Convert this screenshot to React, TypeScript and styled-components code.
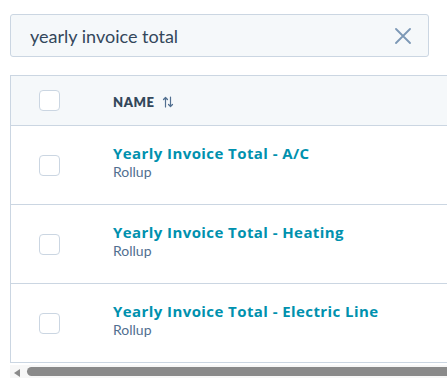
import React from "react";
import styled, { createGlobalStyle } from "styled-components";

const Global = createGlobalStyle`
  html, body { margin: 0; padding: 0; background: #ffffff; overflow: hidden; }
  body { font-family: Lato, "Noto Sans", sans-serif; color: #33475b; }
`;

const Page = styled.div`
  width: 447px;
  height: 386px;
  overflow: hidden;
  padding: 14px 0 0 10px;
  box-sizing: border-box;
  display: flex;
  flex-direction: column;
`;

const SearchBox = styled.div`
  width: 419px;
  height: 43px;
  box-sizing: border-box;
  border: 1px solid #cbd6e2;
  border-radius: 3px;
  background: #f5f8fa;
  display: flex;
  align-items: center;
  padding: 0 17px 0 19px;
`;

const SearchText = styled.span`
  flex: 1;
  font-size: 18px;
  color: #33475b;
`;

const ClearButton = styled.span`
  display: flex;
  width: 16px;
  height: 16px;
`;

const Table = styled.div`
  margin-top: 18px;
  width: 600px;
  border: 1px solid #cbd6e2;
  border-right: none;
  box-sizing: border-box;
`;

const HeaderRow = styled.div`
  height: 49px;
  background: #f5f8fa;
  border-bottom: 1px solid #cbd6e2;
  display: flex;
  align-items: center;
`;

const Row = styled.div<{ $last?: boolean }>`
  height: 78px;
  display: flex;
  align-items: center;
  border-bottom: ${(p) => (p.$last ? "none" : "1px solid #cbd6e2")};
  background: #ffffff;
`;

const CheckCell = styled.div`
  width: 102px;
  padding-left: 28px;
  box-sizing: border-box;
  display: flex;
  align-items: center;
`;

const Checkbox = styled.span`
  width: 21px;
  height: 21px;
  box-sizing: border-box;
  border: 1px solid #cbd6e2;
  border-radius: 4px;
  background: #ffffff;
`;

const HeaderLabel = styled.div`
  display: flex;
  align-items: center;
  gap: 7px;
  padding-top: 2px;
  font-size: 13px;
  font-weight: 800;
  letter-spacing: 0.6px;
  color: #33475b;
`;

const NameCell = styled.div`
  display: flex;
  flex-direction: column;
  margin-top: -6px;
`;

const Title = styled.a`
  font-family: "Open Sans", Lato, sans-serif;
  font-size: 15px;
  font-weight: 700;
  color: #0091ae;
  text-decoration: none;
  line-height: 20px;
  letter-spacing: 0.42px;
`;

const Sub = styled.span`
  font-size: 14px;
  color: #516f90;
  line-height: 18px;
`;

const ScrollBar = styled.div`
  height: 13px;
  margin-top: 2px;
  display: flex;
  align-items: center;
  gap: 7px;
  padding-left: 4px;
  background: #f7f7f7;
`;

const ArrowLeft = styled.span`
  width: 0;
  height: 0;
  margin-top: 2px;
  border-top: 4px solid transparent;
  border-bottom: 4px solid transparent;
  border-right: 6px solid #8a8a8a;
`;

const Thumb = styled.span`
  flex: 1;
  height: 9px;
  border-radius: 5px 0 0 5px;
  background: #8a8a8a;
`;

const rows = [
  "Yearly Invoice Total - A/C",
  "Yearly Invoice Total - Heating",
  "Yearly Invoice Total - Electric Line",
];

export default function App() {
  return (
    <>
      <Global />
      <Page>
        <SearchBox>
          <SearchText>yearly invoice total</SearchText>
          <ClearButton>
            <svg width="16" height="16" viewBox="0 0 16 16">
              <path d="M1 1 L15 15 M15 1 L1 15" stroke="#7c98b6" strokeWidth="1.8" strokeLinecap="round" />
            </svg>
          </ClearButton>
        </SearchBox>
        <Table>
          <HeaderRow>
            <CheckCell>
              <Checkbox />
            </CheckCell>
            <HeaderLabel>
              NAME
              <svg width="12" height="12" viewBox="0 0 12 12">
                <path d="M3.5 11 V1.5 M1.5 3.5 L3.5 1.5 L5.5 3.5 M8.5 1 V10.5 M6.5 8.5 L8.5 10.5 L10.5 8.5" stroke="#516f90" strokeWidth="1.2" fill="none" strokeLinecap="round" strokeLinejoin="round" />
              </svg>
            </HeaderLabel>
          </HeaderRow>
          {rows.map((r, i) => (
            <Row key={r} $last={i === rows.length - 1}>
              <CheckCell>
                <Checkbox />
              </CheckCell>
              <NameCell>
                <Title href="#">{r}</Title>
                <Sub>Rollup</Sub>
              </NameCell>
            </Row>
          ))}
        </Table>
        <ScrollBar>
          <ArrowLeft />
          <Thumb />
        </ScrollBar>
      </Page>
    </>
  );
}
